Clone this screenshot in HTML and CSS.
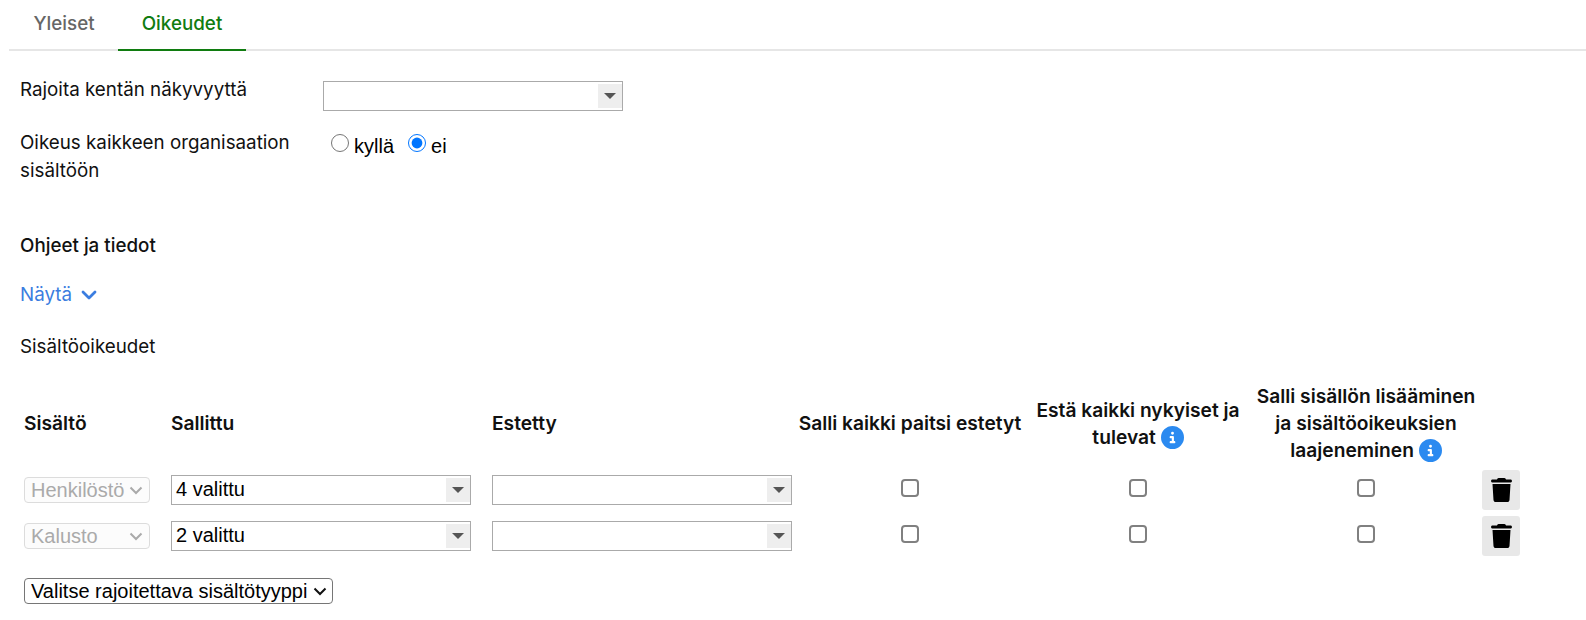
FILE: index.html
```html
<!DOCTYPE html>
<html>
<head>
  <title>Oikeudet</title>
  <link rel="stylesheet" href="styles.css">
</head>
<body>
  <div class="tabs">
    <div class="tab">Yleiset</div>
    <div class="tab active">Oikeudet</div>
  </div>

  <div class="form">
    <div class="form-row first">
      <div class="form-label">Rajoita kentän näkyvyyttä</div>
      <div class="combo"><span class="combo-arrow"></span></div>
    </div>
    <div class="form-row second">
      <div class="form-label">Oikeus kaikkeen organisaation sisältöön</div>
      <div class="radios">
        <input type="radio" name="org"><label>kyllä</label>
        <input type="radio" name="org" checked><label>ei</label>
      </div>
    </div>

    <div class="section-title">Ohjeet ja tiedot</div>
    <div class="show-link">Näytä
      <svg width="16" height="11" viewBox="0 0 16 11"><polyline points="2,2 8,8 14,2" fill="none" stroke="currentColor" stroke-width="2.8" stroke-linecap="round" stroke-linejoin="round"/></svg>
    </div>
    <div class="section-plain">Sisältöoikeudet</div>

    <table class="rights">
      <colgroup>
        <col class="col-type"><col class="col-allow"><col class="col-deny">
        <col class="col-check"><col class="col-check"><col class="col-check">
        <col class="col-del">
      </colgroup>
      <thead>
        <tr>
          <th class="left">Sisältö</th>
          <th class="left">Sallittu</th>
          <th class="left">Estetty</th>
          <th>Salli kaikki paitsi estetyt</th>
          <th>Estä kaikki nykyiset ja tulevat
            <svg class="info" viewBox="0 0 512 512"><path d="M256 512A256 256 0 1 0 256 0a256 256 0 1 0 0 512zM216 336h24V272H216c-13.3 0-24-10.7-24-24s10.7-24 24-24h48c13.3 0 24 10.7 24 24v88h8c13.3 0 24 10.7 24 24s-10.7 24-24 24H216c-13.3 0-24-10.7-24-24s10.7-24 24-24zm40-208a32 32 0 1 1 0 64 32 32 0 1 1 0-64z"/></svg>
          </th>
          <th>Salli sisällön lisääminen ja sisältöoikeuksien laajeneminen
            <svg class="info" viewBox="0 0 512 512"><path d="M256 512A256 256 0 1 0 256 0a256 256 0 1 0 0 512zM216 336h24V272H216c-13.3 0-24-10.7-24-24s10.7-24 24-24h48c13.3 0 24 10.7 24 24v88h8c13.3 0 24 10.7 24 24s-10.7 24-24 24H216c-13.3 0-24-10.7-24-24s10.7-24 24-24zm40-208a32 32 0 1 1 0 64 32 32 0 1 1 0-64z"/></svg>
          </th>
          <th></th>
        </tr>
      </thead>
      <tbody>
        <tr>
          <td><select class="type-select" disabled><option>Henkilöstö</option></select></td>
          <td><div class="combo"><span class="combo-text">4 valittu</span><span class="combo-arrow"></span></div></td>
          <td><div class="combo"><span class="combo-arrow"></span></div></td>
          <td class="center"><input type="checkbox"></td>
          <td class="center"><input type="checkbox"></td>
          <td class="center"><input type="checkbox"></td>
          <td class="del-cell">
            <button class="del-btn"><svg width="21" height="24" viewBox="0 0 448 512"><path d="M135.2 17.7L128 32H32C14.3 32 0 46.3 0 64S14.3 96 32 96H416c17.7 0 32-14.3 32-32s-14.3-32-32-32H320l-7.2-14.3C307.4 6.8 296.3 0 284.2 0H163.8c-12.1 0-23.2 6.8-28.6 17.7zM416 128H32L53.2 467c1.6 25.3 22.6 45 47.9 45H346.9c25.3 0 46.3-19.7 47.9-45L416 128z"/></svg></button>
          </td>
        </tr>
        <tr>
          <td><select class="type-select" disabled><option>Kalusto</option></select></td>
          <td><div class="combo"><span class="combo-text">2 valittu</span><span class="combo-arrow"></span></div></td>
          <td><div class="combo"><span class="combo-arrow"></span></div></td>
          <td class="center"><input type="checkbox"></td>
          <td class="center"><input type="checkbox"></td>
          <td class="center"><input type="checkbox"></td>
          <td class="del-cell">
            <button class="del-btn"><svg width="21" height="24" viewBox="0 0 448 512"><path d="M135.2 17.7L128 32H32C14.3 32 0 46.3 0 64S14.3 96 32 96H416c17.7 0 32-14.3 32-32s-14.3-32-32-32H320l-7.2-14.3C307.4 6.8 296.3 0 284.2 0H163.8c-12.1 0-23.2 6.8-28.6 17.7zM416 128H32L53.2 467c1.6 25.3 22.6 45 47.9 45H346.9c25.3 0 46.3-19.7 47.9-45L416 128z"/></svg></button>
          </td>
        </tr>
      </tbody>
    </table>

    <select class="add-select"><option>Valitse rajoitettava sisältötyyppi</option></select>
  </div>
</body>
</html>
```

FILE: styles.css
```css
body {
  margin: 0;
  padding: 0 0 0 9px;
  background-color: white;
  color: #111;
  font-family: Inter, "Liberation Sans", sans-serif;
  font-size: 18.8px;
  line-height: 27px;
  overflow: hidden;
}

.tabs {
  display: flex;
  height: 49px;
  padding-left: 1px;
  border-bottom: 2px solid #e6e6e6;
}

.tab {
  width: 108px;
  margin-bottom: -2px;
  padding-top: 10px;
  text-align: center;
  color: #666;
  font-weight: 500;
  box-sizing: border-box;
}

.tab.active {
  width: 128px;
  color: #107c10;
  border-bottom: 2px solid #107c10;
}

.form {
  padding-left: 11px;
}

.form-row {
  display: flex;
}

.form-row.first {
  margin-top: 30px;
  height: 30px;
}

.form-row.first .form-label {
  line-height: 18px;
}

.form-row.second {
  margin-top: 18px;
}

.form-label {
  width: 303px;
  padding-right: 20px;
  box-sizing: border-box;
  line-height: 28px;
}

.combo {
  display: flex;
  align-items: center;
  justify-content: space-between;
  width: 300px;
  height: 30px;
  border: 1px solid #aaa;
  box-sizing: border-box;
  font-family: "Liberation Sans", sans-serif;
  font-size: 20px;
  color: #000;
}

.combo-text {
  padding-left: 4px;
  margin-bottom: 2px;
}

.combo-arrow {
  position: relative;
  width: 24px;
  height: 24px;
  margin-left: auto;
  background-color: #eee;
}

.combo-arrow::after {
  content: "";
  position: absolute;
  left: 6px;
  top: 9px;
  border-left: 6px solid transparent;
  border-right: 6px solid transparent;
  border-top: 6px solid #555;
}

.radios {
  display: flex;
  align-items: flex-start;
  padding-left: 8px;
  font-family: "Liberation Sans", sans-serif;
  font-size: 20px;
  color: #000;
}

.radios input {
  width: 18px;
  height: 18px;
  margin: 5px 5px 0 0;
}

.radios label {
  margin-right: 14px;
  padding-top: 4px;
}

.section-title {
  margin-top: 47px;
  font-weight: 500;
}

.show-link {
  margin-top: 22px;
  color: #3b7de0;
}

.show-link svg {
  margin-left: 4px;
}

.section-plain {
  margin-top: 25px;
}

.rights {
  margin-top: 23px;
  width: 1505px;
  border-collapse: collapse;
  table-layout: fixed;
}

.col-type { width: 147px; }
.col-allow { width: 321px; }
.col-deny { width: 308px; }
.col-check { width: 228px; }
.col-del { width: 45px; }

.rights th {
  padding: 0;
  font-size: 19.2px;
  font-weight: 600;
  text-align: center;
  vertical-align: middle;
}

.rights th.left {
  padding-left: 4px;
  text-align: left;
}

.rights td {
  padding: 3px 4px;
  height: 40px;
  vertical-align: middle;
}

.rights tbody tr:first-child td {
  padding-top: 6px;
}

.rights td.center {
  text-align: center;
}

.rights td.center input {
  appearance: none;
  display: block;
  width: 18px;
  height: 18px;
  margin: 0 auto 4px;
  border: 2px solid #808080;
  border-radius: 4px;
  background-color: white;
}

.rights td.del-cell {
  padding-left: 2px;
  padding-right: 0;
}

.info {
  width: 23px;
  height: 23px;
  fill: #2b8af0;
  vertical-align: -5px;
}

.type-select {
  appearance: none;
  display: block;
  width: 126px;
  height: 26px;
  padding: 0 0 0 6px;
  border: 1px solid #dcdcdc;
  border-radius: 4px;
  background: #fcfcfc url("data:image/svg+xml,%3Csvg xmlns='http://www.w3.org/2000/svg' width='14' height='9'%3E%3Cpolyline points='1.5,1.5 7,7 12.5,1.5' fill='none' stroke='%23aaa' stroke-width='2'/%3E%3C/svg%3E") no-repeat right 6px center;
  color: #aaa;
  font-family: "Liberation Sans", sans-serif;
  font-size: 20px;
  opacity: 1;
}

.del-btn {
  display: flex;
  align-items: center;
  justify-content: center;
  width: 38px;
  height: 40px;
  padding: 0;
  border: none;
  border-radius: 3px;
  background-color: #e8e8e8;
}

.add-select {
  appearance: none;
  display: block;
  margin: 19px 0 0 4px;
  width: 309px;
  height: 26px;
  padding: 0 0 0 6px;
  border: 1px solid #767676;
  border-radius: 4px;
  background: white url("data:image/svg+xml,%3Csvg xmlns='http://www.w3.org/2000/svg' width='14' height='9'%3E%3Cpolyline points='1.5,1.5 7,7 12.5,1.5' fill='none' stroke='%23111' stroke-width='2'/%3E%3C/svg%3E") no-repeat right 5px center;
  color: #000;
  font-family: "Liberation Sans", sans-serif;
  font-size: 20px;
}
```
